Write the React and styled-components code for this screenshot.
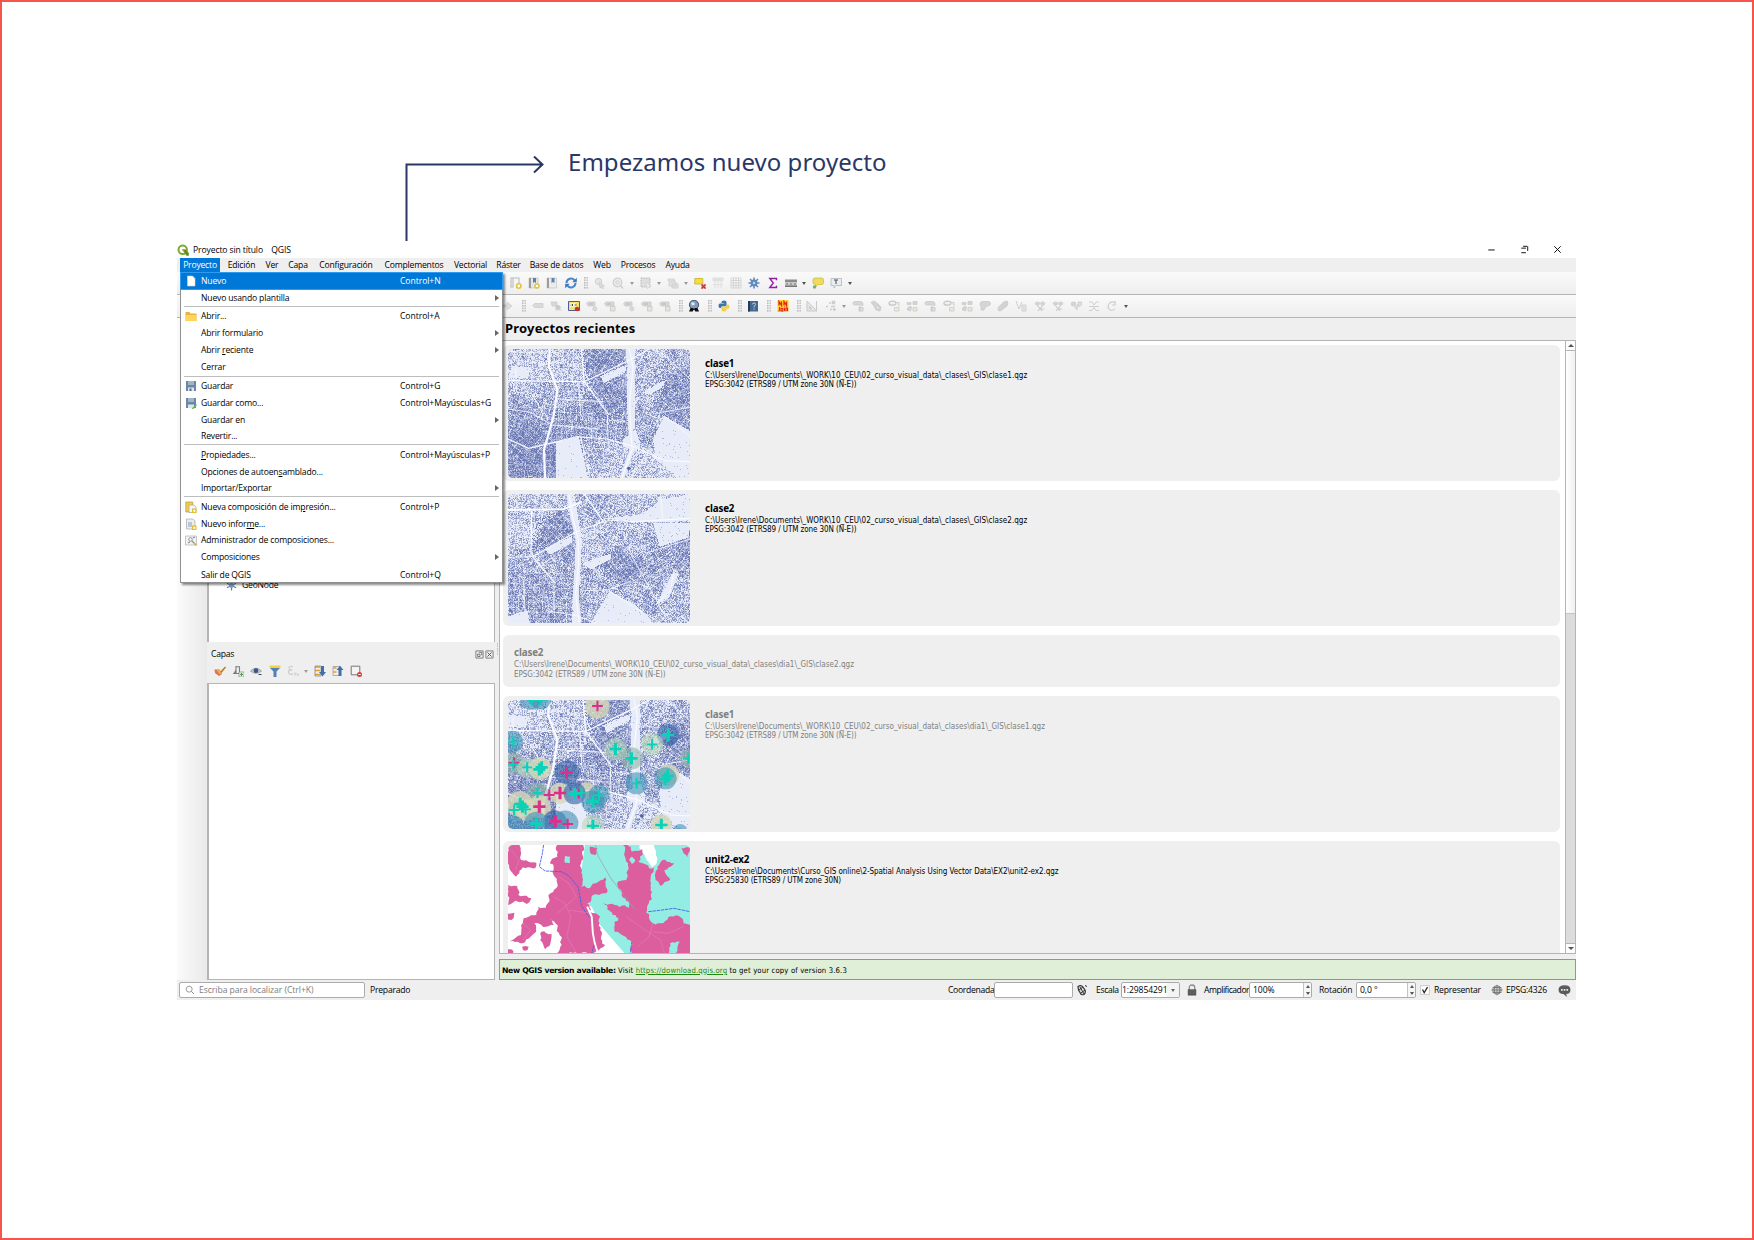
import React from "react";
import styled, { createGlobalStyle, css } from "styled-components";

const UI = `"Open Sans", "Noto Sans", "Liberation Sans", sans-serif`;
const TAHOMA = `"DejaVu Sans Condensed", "DejaVu Sans", "Noto Sans", sans-serif`;
const NAVY = "#2b3767";

const Global = createGlobalStyle`
  * { box-sizing: border-box; }
  html, body { margin: 0; background: #fff; }
  body { font-family: ${UI}; }
`;

const Page = styled.main`
  width: 1754px;
  height: 1240px;
  border: 2px solid #f4564e;
  padding: 138px 0 0 175px;
  background: #fff;
  overflow: hidden;
`;

const Note = styled.header`
  display: flex;
  height: 100px;
  padding-left: 226px;
`;
const NoteArrow = styled.svg`
  width: 148px;
  height: 101px;
  flex: none;
  position: relative;
  z-index: 1;
`;
const NoteText = styled.h1`
  margin: 5px 0 0 17px;
  font: 400 24px/34px "Noto Sans", sans-serif;
  letter-spacing: 0.04px;
  color: ${NAVY};
  white-space: nowrap;
`;

const Win = styled.section`
  position: relative;
  width: 1399px;
  height: 760px;
  display: flex;
  flex-direction: column;
  background: #efefef;
  color: #000;
  font-size: 8.6px;
  line-height: 12px;
  white-space: nowrap;
`;

const TitleBar = styled.div`
  height: 18px;
  flex: none;
  background: #fff;
  display: flex;
  align-items: center;
  padding: 1px 13px 0 0;
`;
const TitleText = styled.span`
  margin-left: 4px;
  letter-spacing: -0.12px;
`;
const WinButtons = styled.div`
  margin: -1px 0 0 auto;
  display: flex;
  gap: 22px;
`;

const MenuBar = styled.nav`
  height: 14px;
  flex: none;
  display: flex;
  padding-left: 3px;
`;
const MenuLabel = styled.span`
  width: ${(p) => p.$w}px;
  line-height: 15px;
  text-align: center;
  letter-spacing: -0.2px;
  ${(p) =>
    p.$open &&
    css`
      background: #0078d7;
      color: #fff;
    `}
`;

const Toolbar = styled.div`
  height: 23px;
  flex: none;
  display: flex;
  align-items: center;
  padding-left: ${(p) => p.$pad}px;
  border-bottom: 1px solid #b4b4b4;
  background: linear-gradient(#fafafa, #eeeeee);
`;
const Slot = styled.span`
  width: ${(p) => p.$w}px;
  flex: none;
  display: flex;
  justify-content: center;
  align-items: center;
`;
const Caret = styled.i`
  border: 2.5px solid transparent;
  border-top: 3px solid ${(p) => p.$c || "#9a9a9a"};
  border-bottom: 0;
`;
const Grip = styled.i`
  width: 4px;
  height: 12px;
  margin-left: 2px;
  background: radial-gradient(circle at 0.7px 0.7px, #bdbdbd 0.7px, transparent 0.9px) 0 0 / 2.5px 2.5px;
`;
const Svg = styled.svg`
  width: ${(p) => p.$s || 12}px;
  height: ${(p) => p.$s || 12}px;
  display: block;
  flex: none;
`;

const Body = styled.div`
  height: 662px;
  flex: none;
  display: flex;
`;
const SideTools = styled.div`
  width: 30px;
  flex: none;
  background: linear-gradient(90deg, #fbfbfb, #e9e9e9);
`;
const Docks = styled.div`
  width: 288px;
  flex: none;
  display: flex;
  flex-direction: column;
`;
const BrowserBox = styled.div`
  height: 324px;
  background: #fff;
  border: solid #b4b4b4;
  border-width: 0 1px 0 2px;
  padding: 261px 0 0 17px;
`;
const TreeRow = styled.div`
  display: flex;
  align-items: center;
  gap: 5px;
  height: 12px;
`;
const DockHead = styled.div`
  display: flex;
  height: 20px;
  margin-top: 2px;
  padding: 0 1px 0 4px;
  align-items: center;
`;
const DockButtons = styled.span`
  margin-left: auto;
  display: flex;
  gap: 1px;
`;
const DockTools = styled.div`
  height: 19px;
  display: flex;
  align-items: center;
  padding: 0 0 5px 4px;
`;
const LayersBox = styled.div`
  flex: 1;
  background: #fff;
  border: 1px solid #b4b4b4;
  border-left-width: 2px;
`;
const Splitter = styled.div`
  width: 4px;
  flex: none;
  display: flex;
  align-items: center;
  justify-content: center;
`;

const Main = styled.div`
  flex: 1;
  min-width: 0;
  display: flex;
  flex-direction: column;
`;
const Heading = styled.h2`
  margin: 0;
  height: 22px;
  padding-left: 6px;
  font: 700 13px/21px "Noto Sans", sans-serif;
  letter-spacing: 0.18px;
`;
const ListBox = styled.div`
  height: 614px;
  flex: none;
  display: flex;
  border: 1px solid #b4b4b4;
  background: #fff;
  overflow: hidden;
`;
const Cards = styled.div`
  flex: 1;
  display: flex;
  flex-direction: column;
  gap: 9px;
  padding: 4px 5px 0 3px;
`;
const Card = styled.article`
  height: ${(p) => (p.$short ? 52 : 136)}px;
  flex: none;
  display: flex;
  gap: 15px;
  padding: 4px 5px;
  padding-left: ${(p) => (p.$short ? 11 : 5)}px;
  border-radius: 6px;
  background: #efefef;
  color: ${(p) => (p.$off ? "#808080" : "#000")};
`;
const Thumb = styled.svg`
  width: 182px;
  height: 129px;
  border-radius: 5px;
  flex: none;
`;
const Info = styled.div`
  padding-top: ${(p) => (p.$short ? 7 : 7.5)}px;
  font: 400 8px/9px ${TAHOMA};
`;
const Name = styled.h3`
  margin: 0;
  font: 700 9.8px/14px "Noto Sans", sans-serif;
  letter-spacing: -0.15px;
`;
const Line = styled.p`
  margin: 0;
  line-height: 9.5px;
  letter-spacing: ${(p) => p.$ls ?? -0.09}px;
`;

const Scroll = styled.div`
  width: 10px;
  flex: none;
  display: flex;
  flex-direction: column;
  border-left: 1px solid #b4b4b4;
  background: #dcdcdc;
`;
const ScrollBtn = styled.div`
  height: 10px;
  display: flex;
  align-items: center;
  justify-content: center;
  background: #fcfcfc;
  border: solid #b4b4b4;
  border-width: ${(p) => (p.$down ? "1px 0 0" : "0 0 1px")};
  i {
    border: 3px solid transparent;
    ${(p) =>
      p.$down
        ? "border-top-color:#555;border-bottom:0;"
        : "border-bottom-color:#555;border-top:0;"}
  }
`;
const ScrollThumb = styled.div`
  height: 263px;
  margin-bottom: auto;
  background: linear-gradient(90deg, #fff, #f0f0f0);
  border-bottom: 1px solid #c4c4c4;
`;

const MessageBar = styled.div`
  margin-top: 5px;
  height: 21px;
  border: 1px solid #8c9a86;
  background: #dfefd8;
  padding-left: 2px;
  font: 400 7.7px/21px ${TAHOMA};
  letter-spacing: 0.13px;
  a {
    color: #1c8a12;
  }
  b {
    font: 700 7.7px/21px "DejaVu Sans", sans-serif;
    letter-spacing: -0.32px;
  }
`;

const StatusBar = styled.footer`
  height: 20px;
  flex: none;
  display: flex;
  align-items: center;
  padding: 0 5px 0 2px;
`;
const BottomLine = styled.div`
  height: 1px;
  background: linear-gradient(90deg, #9a918b 34px, #d9d6d3 34px 285px, #9a918b 285px);
`;
const Field = styled.span`
  width: ${(p) => p.$w}px;
  height: 16px;
  flex: none;
  display: flex;
  align-items: center;
  overflow: hidden;
  background: #fff;
  border: 1px solid #ababab;
  border-radius: 2px;
  padding-left: ${(p) => p.$p ?? 3}px;
  letter-spacing: -0.1px;
`;
const Locator = styled(Field)`
  gap: 4px;
  color: #7d7d7d;
  letter-spacing: -0.05px;
`;
const StatusText = styled.span`
  width: ${(p) => p.$w}px;
  flex: none;
  margin-left: ${(p) => p.$m || 0}px;
  letter-spacing: ${(p) => p.$ls ?? -0.22}px;
`;
const StatusRight = styled.div`
  margin-left: auto;
  display: flex;
  align-items: center;
`;
const Arrows = styled.span`
  margin-left: auto;
  width: 8px;
  height: 14px;
  display: flex;
  flex-direction: column;
  justify-content: space-around;
  align-items: center;
  border-left: 1px solid #c4c4c4;
  background: #f6f6f6;
  &::before {
    content: "";
    border: 2px solid transparent;
    border-top: 0;
    border-bottom: 3px solid #555;
  }
  &::after {
    content: "";
    border: 2px solid transparent;
    border-bottom: 0;
    border-top: 3px solid #555;
  }
`;
const DropZone = styled.span`
  margin-left: auto;
  width: 14px;
  height: 14px;
  display: flex;
  align-items: center;
  justify-content: center;
  background: #f4f4f4;
`;

const Menu = styled.div`
  position: absolute;
  left: 3px;
  top: 32px;
  width: 323px;
  height: 311px;
  border: 1px solid #909090;
  background: #fff;
  box-shadow: 2px 2px 2px rgba(0, 0, 0, 0.45);
`;
const Item = styled.div`
  height: ${(p) => p.$h}px;
  display: grid;
  grid-template-columns: 20px 199px 1fr 9px;
  align-items: center;
  padding-top: ${(p) => p.$pt || 0}px;
  letter-spacing: -0.17px;
  ${(p) =>
    p.$on &&
    css`
      background: #0078d7;
      color: #fff;
      box-shadow: 0 0 0 1px #2f9bf0;
    `}
`;
const Shortcut = styled.span`
  letter-spacing: -0.06px;
`;
const ItemIcon = styled.span`
  padding-left: 4px;
`;
const Sep = styled.hr`
  margin: 0 3px;
  border: 0;
  height: 1px;
  background: #bdbdbd;
`;
const Sub = styled.i`
  justify-self: start;
  margin-left: 2px;
  border: 3px solid transparent;
  border-left: 4px solid #666;
  border-right: 0;
`;

/* ---------- icons ---------- */

const G = "#cfcfcf";
const shapes = {
  page: <path d="M2.5 1h5l2.5 2.5V11h-7.500z" fill="#fff" stroke="#d5d5d5" strokeWidth=".6" />,
  folder: (
    <>
      <path d="M.5 2h4l1 1.500h6V11H.5z" fill="#e8b63a" />
      <path d="M.5 5h11v6H.5z" fill="#fcd45e" />
    </>
  ),
  save: (
    <>
      <path d="M1 1h10v10H1z" fill="#6a87a8" />
      <path d="M3 1h6v4H3z" fill="#a3b4c6" />
      <path d="M3 7.500h6V11H3z" fill="#dfe5ea" />
      <path d="M4.500 8.500h2V11h-2z" fill="#546a82" />
    </>
  ),
  saveAs: (
    <>
      <path d="M1 1h10v10H1z" fill="#6a87a8" />
      <path d="M3 1h6v4H3z" fill="#a3b4c6" />
      <path d="M3 7.500h6V11H3z" fill="#dfe5ea" />
      <path d="M6.500 11.800 11 7l1 1-3.500 4z" fill="#6bb35a" />
    </>
  ),
  newLayout: (
    <>
      <path d="M.8 1h7v10h-7z" fill="#f0cd4a" stroke="#b89a30" strokeWidth=".7" />
      <path d="M4 4h5l2 2v5.500H4z" fill="#f4f4f4" stroke="#a8a8a8" strokeWidth=".7" />
      <path d="M7 7.500h4.500V12H7z" fill="#e0c02f" />
      <path d="M8.300 8.800h2v2h-2z" fill="#fff" />
    </>
  ),
  newReport: (
    <>
      <path d="M1.500 1h6.500l2 2v8h-8.500z" fill="#eee" stroke="#a8a8a8" strokeWidth=".7" />
      <path d="M3 4h4v5H3z" fill="#b9c5d8" />
      <path d="M7 7.500h4.500V12H7z" fill="#e0c02f" />
      <path d="M8.300 8.800h2v2h-2z" fill="#fff" />
    </>
  ),
  layoutMgr: (
    <>
      <path d="M.5 2h11v9H.5z" fill="#f3f3f3" stroke="#b0b0b0" strokeWidth=".7" />
      <circle cx="5.500" cy="5.500" r="1.800" fill="none" stroke="#8d8d8d" strokeWidth=".9" />
      <path d="m7 7 4 4M8 4l2-1M3 9l2-1" stroke="#8d8d8d" strokeWidth="1.100" />
      <path d="m9 9 2.500 2.500" stroke="#d6b84a" strokeWidth="1.300" />
    </>
  ),
  bookmarkNew: (
    <>
      <path d="M1 1h2v9H1zM1 1h8v6" fill="none" stroke="#bcbcbc" strokeWidth="1.100" />
      <circle cx="8.800" cy="9" r="2.200" fill="#fff" stroke="#e0c43c" strokeWidth="1.600" />
    </>
  ),
  bookmarkAdd: (
    <>
      <path d="M1 1h9v10H1z" fill="#e6e6e6" stroke="#b8b8b8" strokeWidth=".6" />
      <path d="M1 1h2v10H1z" fill="#9d9d9d" />
      <path d="M5 1h3v5L6.500 5 5 6z" fill="#5c83b0" />
      <circle cx="9" cy="9" r="2" fill="#fff" stroke="#e0c43c" strokeWidth="1.500" />
    </>
  ),
  bookmark: (
    <>
      <path d="M1 1h9.500v10H1z" fill="#ececec" stroke="#c0c0c0" strokeWidth=".6" />
      <path d="M1 1h2v10H1z" fill="#9d9d9d" />
      <path d="M5.500 1h3v5L7 5 5.500 6z" fill="#5c83b0" />
    </>
  ),
  refresh: (
    <>
      <path d="M1.500 6A4.500 4.500 0 0 1 9.600 3.400M10.500 6A4.500 4.500 0 0 1 2.400 8.600" fill="none" stroke="#4b86c9" strokeWidth="2" />
      <path d="M11.800.8v4.500H7.300zM.2 11.200V6.700h4.500z" fill="#3d76ba" />
    </>
  ),
  pick: (
    <>
      <circle cx="4.500" cy="4.500" r="3.200" fill="#e6e6e6" stroke={G} />
      <path d="m5 5 5.500 4-2 .3.800 2-1.200.4-.8-2L6 11z" fill="#dcdcdc" stroke="#c6c6c6" strokeWidth=".6" />
    </>
  ),
  lens: (
    <>
      <circle cx="5.500" cy="5.500" r="4.300" fill="#ececec" stroke={G} strokeWidth="1.200" />
      <circle cx="5.500" cy="5.500" r="1.600" fill="none" stroke={G} />
      <path d="m8 8 3 3.500" stroke={G} strokeWidth="1.500" />
    </>
  ),
  selBox: (
    <>
      <path d="M1 1h9v9H1z" fill="#dedede" stroke="#b9b9b9" strokeDasharray="1.500 1" />
      <path d="m6 5 5 4.500-2.500.3L7.500 12z" fill="#f2f2f2" stroke={G} strokeWidth=".6" />
    </>
  ),
  copies: (
    <path d="M1 2h6l1 2H1zM2 5h7v4H2zM5 7h6v4H5z" fill="#e3e3e3" stroke="#cdcdcd" strokeWidth=".8" />
  ),
  deselect: (
    <>
      <path d="M.8 1.500h8v5.500h-8z" fill="#f5dd3a" stroke="#c8b02c" strokeWidth=".8" />
      <path d="M7 7h5v5H7z" fill="#f4b5b5" />
      <path d="m7.500 7.500 4 4m0-4-4 4" stroke="#cf2323" strokeWidth="1.200" />
    </>
  ),
  table: (
    <>
      <path d="M1 1h10v10H1z" fill="#f2f2f2" />
      <path d="M1 1h10v3H1zM3 5v6M6 5v6M9 5v6M1 7.500h10" stroke="#e0e0e0" fill="#e0e0e0" />
    </>
  ),
  calc: (
    <path d="M1 1h10v10H1zM1 3.500h10M1 6h10M1 8.500h10M3.500 1v10M6 1v10M8.500 1v10" fill="none" stroke="#d2d2d2" strokeWidth=".9" />
  ),
  gear: (
    <>
      <path d="M6 .5v11M.5 6h11M2 2l8 8M10 2l-8 8" stroke="#5f8ac0" strokeWidth="1.600" />
      <circle cx="6" cy="6" r="3.400" fill="#5f8ac0" />
      <circle cx="6" cy="6" r="1.200" fill="#c6d6ea" />
    </>
  ),
  sigma: <path d="M9.500 3.300V1.500H2.800l3.500 4.500-3.500 4.500h6.700V8.700" fill="none" stroke="#981ba5" strokeWidth="1.400" />,
  ruler: (
    <>
      <path d="M0 2.500h12V5H0z" fill="#8b8b8b" />
      <path d="M0 5h12v5H0z" fill="#c8c8c8" />
      <path d="M0 8.500h12V10H0zM1 6.500h2v1H1zM5 6.500h2v1H5zM9 6.500h2v1H9z" fill="#777" />
    </>
  ),
  tip: (
    <>
      <path d="M3 1h7q1.500 0 1.500 2v2.500q0 2-1.500 2H6L3 11l.5-3.500Q1 7.500 1 5.500V3q0-2 2-2z" fill="#efdc5e" stroke="#c9b441" strokeWidth=".7" />
      <circle cx="2.500" cy="10" r="1.700" fill="#77b26b" />
    </>
  ),
  textNote: (
    <>
      <path d="M1 1.500h10.500v7H6L4 11V8.500H1z" fill="#e8edf1" stroke="#b5bcc2" strokeWidth=".9" />
      <path d="M4 3h4M6 3v4" stroke="#555" strokeWidth="1.100" />
    </>
  ),
  next: <path d="M0 5h5V2l5 4-5 4V7H0z" fill="#dcdcdc" stroke="#c8c8c8" strokeWidth=".6" />,
  tag: <path d="m.5 5.500 2-2H11v4H2.500z" fill="#dadada" stroke="#cfcfcf" strokeWidth=".9" />,
  tagDot: (
    <>
      <path d="M1 2h6v4H2z" fill="#d8d8d8" stroke="#cbcbcb" strokeWidth=".8" />
      <circle cx="8" cy="7.500" r="2.600" fill="#cacaca" />
      <path d="M5 10h7" stroke="#d8d8d8" />
    </>
  ),
  labelOn: (
    <>
      <path d="M.5 1.500h11v9H.5z" fill="#f7e36a" stroke="#4a5f9c" />
      <path d="M2 3.500h6v3H2z" fill="#fff" />
      <path d="M2.500 5h1M4.500 4v2M6.500 5h2" stroke="#333" strokeWidth=".9" />
      <circle cx="9" cy="9" r="2.300" fill="#c9312c" />
    </>
  ),
  tagB: (
    <>
      <path d="M.5 3.500 2 2h7v4H2z" fill="#d8d8d8" stroke="#cacaca" strokeWidth=".8" />
      <path d="M3 4h4" stroke="#b4b4b4" />
      <circle cx="8.800" cy="8.800" r="2" fill="#e0dad7" stroke="#cdc8c5" strokeWidth=".8" />
    </>
  ),
  tagC: (
    <>
      <path d="M.5 3.500 2 2h8v4H2z" fill="#d8d8d8" stroke="#cacaca" strokeWidth=".8" />
      <path d="M3 4h4" stroke="#b4b4b4" />
      <path d="M6.500 6.500h4.500V11H6.500z" fill="#e6e4de" stroke="#cdccc5" strokeWidth=".9" />
    </>
  ),
  globeFind: (
    <>
      <circle cx="6" cy="4.800" r="4.600" fill="#7f9dc0" stroke="#28394d" strokeWidth=".8" />
      <path d="M3 2.500h3l1 2-3 1zM7 1.500l2.500 1.500" fill="#e5edf5" />
      <path d="M1 11.500 2.500 8h2.800l.4 1.500h.6L6.700 8h2.800L11 11.500H7.300L6.500 10h-1l-.8 1.500z" fill="#111" />
    </>
  ),
  python: (
    <>
      <path d="M3.500 3V2q0-1.500 2.500-1.500T8.500 2v3q0 1.200-1.500 1.200H4.500Q3 6.200 3 8H2Q.5 8 .5 5.800T2 3.500h4V3z" fill="#3b76ad" />
      <path d="M8.500 9v1q0 1.500-2.500 1.500T3.500 10V7.500Q3.500 6.500 5 6.500h2.500Q9 6.300 9 4.500h1q1.500 0 1.500 2.200T10 8.800H6V9z" fill="#f8ce45" />
    </>
  ),
  help: (
    <>
      <path d="M1 1h10v10.500H1z" fill="#46688f" />
      <path d="M1 1h2v10.500H1z" fill="#273c55" />
      <path d="M5.300 4.500Q5.500 3 7 3t1.600 1.400Q8.500 5.500 7 6.200v1.300M7 8.500v1.200" fill="none" stroke="#c3d2e3" strokeWidth="1" />
    </>
  ),
  nn: (
    <>
      <path d="M.5 0h11v12H.5z" fill="#ffd22e" />
      <path d="M2 5.500v-4l2.500 4v-4M7 5.500v-4l2.500 4v-4" fill="none" stroke="#e3261b" strokeWidth="1.300" />
      <path d="M2.500 7v3q0 1-1 1M4 8.500h1.800V11H4zM7.500 8v3M9 11V8h1.500v3M7.500 6.500v.7" fill="none" stroke="#e3261b" strokeWidth="1.100" />
    </>
  ),
  setsq: <path d="M1 1v10h10zM3.500 6.500V8.800h2.400zM10.500 1v10" fill="#e6e6e6" stroke="#c9c9c9" />,
  nodes: (
    <path d="M1 6.500h2M4 3h2M7.500 1.500h2v2h-2zM6 6.500h4M5 9.500h2M9 8v3M8 9.500h3" fill="none" stroke="#cccccc" strokeWidth="1.400" />
  ),
  vecA: (
    <>
      <path d="M.8 3.500q0-2 2-2H8q3 0 3 2v2L8 5H2.500Q.8 5 .8 3.500z" fill="#d6d8d6" stroke="#cacaca" strokeWidth=".8" />
      <path d="M7 7.500h4V11H7zM8 6v5" fill="#e4e4de" stroke="#c6c6c6" strokeWidth=".9" />
    </>
  ),
  vecB: (
    <>
      <path d="M1 2.500 4 1l4 3 3 3-1 4-4-1-2-4z" fill="#d2d5d2" stroke="#c8c8c8" strokeWidth=".8" />
      <circle cx="7.500" cy="7.500" r="1.500" fill="#efefef" stroke="#bfc9bf" strokeWidth=".8" />
    </>
  ),
  vecC: (
    <>
      <ellipse cx="4.500" cy="3.200" rx="3.600" ry="2" fill="#efefef" stroke="#c6c6c6" strokeWidth="1.200" />
      <path d="M8 2.500h3v4M6.500 7.500h4.500V11H6.500z" fill="#eae8e0" stroke="#d4cfc4" strokeWidth=".9" />
    </>
  ),
  vecD: (
    <>
      <path d="M1 2.500h4v2H1zM7 1.500h4v3H7zM1.500 8q2-3 4-1l-1 4-3-1z" fill="#d4d4d4" stroke="#cbcbcb" strokeWidth=".8" />
      <path d="M7 7.500h4V11H7z" fill="#e9e6dc" stroke="#d0cabd" strokeWidth=".8" />
    </>
  ),
  vecE: <path d="M1 4q0-2.500 3-2.500h5q2.500 0 2.500 2T9 6L7 6.500 5 10H2V6q-1-1-1-2z" fill="#d4d6d4" stroke="#cacaca" strokeWidth=".8" />,
  vecF: <path d="M1 8q1-2 3-3 2-4 6-4 2 2 0 5l-4 3q-1 2-4 2-1-1-1-3z" fill="#d2d4d0" stroke="#c9c9c9" strokeWidth=".8" />,
  vecG: (
    <>
      <path d="m1 1 3 8 3-7" fill="none" stroke="#c8cdd0" />
      <path d="M7 5h4v6H7zM8 7h2M8 9h2" fill="#ededed" stroke="#c6c6c6" strokeWidth=".8" />
    </>
  ),
  vecH: (
    <>
      <ellipse cx="3.500" cy="3.500" rx="2.700" ry="2" fill="#d2d4d2" />
      <ellipse cx="8.700" cy="3.500" rx="2.600" ry="2" fill="#d2d4d2" />
      <path d="m3 5 5 6M9 5 4 11M6 9h4" stroke="#c9c9c9" strokeWidth="1.100" />
    </>
  ),
  vecI: (
    <>
      <ellipse cx="3.500" cy="4" rx="2.800" ry="2.400" fill="#d2d4d2" />
      <path d="M8 2h3.500v3L9 7zM4 6l3 4 1-6" fill="#dedede" stroke="#cccccc" strokeWidth=".8" />
    </>
  ),
  vecJ: <path d="M1 2h3l2 3 2-3h3M1 10.500h3l2-3 2 3h3M1 6.500h10" fill="none" stroke="#cfcfcf" />,
  vecK: <path d="M9 2.500Q5 .8 3 4t.5 5.500Q5 11.500 9 9M9 1v4H6" fill="none" stroke="#cfcfcf" strokeWidth="1.200" />,
  brush: (
    <>
      <path d="M.5 4.500h5L8 9l-3 2-4-3z" fill="#e0705a" />
      <path d="m2.500 5 3-1 2.500 4-2.500 1z" fill="#efb13a" />
      <path d="m6.500 6.500 4.500-5 1 1-4.500 5.500z" fill="#b07a2b" />
    </>
  ),
  addGroup: (
    <>
      <path d="M4 1v8M4 1.700h3.500V8M1 8.500h8M2 8.500 4 5" fill="none" stroke="#7b7b7b" strokeWidth="1.100" />
      <path d="M7 7h5v5H7z" fill="#e8f2e5" stroke="#8b8b8b" strokeWidth=".7" />
      <path d="M9.500 8v3M8 9.500h3" stroke="#47a13a" />
    </>
  ),
  eye: (
    <>
      <path d="M.5 6Q6 .5 11.500 6 6 10.500.5 6z" fill="#c9cdd2" stroke="#808890" strokeWidth=".7" />
      <circle cx="6" cy="5.700" r="2.400" fill="#39587d" />
      <path d="M8.500 9.500h3" stroke="#444" />
    </>
  ),
  filter: (
    <>
      <path d="M.5.500h11v2.500H.5z" fill="#f2d438" />
      <path d="M1 3h10L7.500 6.500V12h-3V6.500z" fill="#5481b3" />
    </>
  ),
  expr: (
    <>
      <path d="M6 1.500Q2 .8 2 3t3 2Q1 5 1.500 7.500T6 9" fill="none" stroke="#cfcfcf" strokeWidth="1.300" />
      <path d="M7 7.500h2.500v3H7zM10 8.500h2v2.500h-2z" fill="#d8d8d8" />
    </>
  ),
  expand: (
    <>
      <path d="M1 2h5M1 5.500h5M1 9.500h5" stroke="#e89a2a" strokeWidth="1.400" />
      <path d="M1 1h6v10H1z" fill="none" stroke="#8c8c8c" strokeWidth=".8" />
      <path d="M7 1h3v6h2l-3.500 4.500L5 7h2z" fill="#3f6fa6" />
    </>
  ),
  collapse: (
    <>
      <path d="M1.500 3h3M1.500 7h3" stroke="#e89a2a" strokeWidth="1.400" />
      <path d="M1 1.500h7v9H1z" fill="none" stroke="#9c9c9c" strokeWidth=".8" />
      <path d="M6.500 11h3V5h2L8 .8 4.500 5h2z" fill="#3f6fa6" />
    </>
  ),
  remove: (
    <>
      <path d="M1.200 1.200h8.600v8.600H1.200z" fill="#f4f4f4" stroke="#777" />
      <circle cx="9.500" cy="9.500" r="2.500" fill="#de3b3b" />
      <path d="M8.300 9.500h2.400" stroke="#fff" />
    </>
  ),
  flake: (
    <>
      <path d="M6 .5v11M1 3.500l10 5M11 3.500l-10 5" stroke="#5f83aa" strokeWidth="1.400" />
      <circle cx="6" cy="6" r="2.600" fill="#7d9dbf" />
    </>
  ),
  float: (
    <>
      <path d="M1.200 1.200h9.600v9.600H1.200z" fill="none" stroke="#777" strokeWidth="1.200" />
      <path d="M5 3h4v4M3.500 5.500h3.200v3.200H3.500z" fill="none" stroke="#555" />
    </>
  ),
  close: (
    <>
      <path d="M1.200 1.200h9.600v9.600H1.200z" fill="none" stroke="#777" strokeWidth="1.200" />
      <path d="m3.300 3.300 5.400 5.400m0-5.400-5.400 5.400" stroke="#555" strokeWidth="1.300" />
    </>
  ),
  search: (
    <>
      <circle cx="5" cy="5" r="3.600" fill="none" stroke="#8a8a8a" />
      <path d="m7.800 7.800 3 3" stroke="#8a8a8a" strokeWidth="1.200" />
    </>
  ),
  target: (
    <>
      <path d="M2 2.500Q5 .5 7 3l2 3q1 3-1 4.500-3 1-4-2L2.500 6z" fill="#ddd" stroke="#333" strokeWidth="1.200" />
      <path d="m3 6 4-3M5 9 9 6M9 1.500l2 1M4 3l4 7" stroke="#333" strokeWidth="1" />
    </>
  ),
  lock: (
    <>
      <path d="M3.300 6V3.500Q3.300 1 6 1t2.700 2.500V6" fill="none" stroke="#8b8b8b" strokeWidth="1.300" />
      <path d="M1.800 5.300h8.400v6.200H1.800z" fill="#555" />
      <path d="M1.800 7h8.400M1.800 9h8.400" stroke="#777" strokeWidth=".6" />
    </>
  ),
  check: (
    <>
      <path d="M.7.700h10.600v10.600H.7z" fill="#fff" stroke="#b5b5b5" strokeWidth=".8" />
      <path d="M3 5.500 5 9.300 9 2.500" fill="none" stroke="#222" strokeWidth="1.500" />
    </>
  ),
  globe: (
    <>
      <circle cx="6" cy="6" r="4.200" fill="#d0d0d0" stroke="#777" strokeWidth=".9" />
      <path d="M.3 6h11.400M6 .8v10.400M1.500 3.500h9M1.500 8.500h9M4 2q-1.500 4 0 8M8 2q1.500 4 0 8" fill="none" stroke="#707070" strokeWidth=".8" />
    </>
  ),
  bubble: (
    <>
      <path d="M6 1.200q5.500 0 5.500 4T7.500 9.200L8.500 12 5 9.200Q.5 9 .5 5.200T6 1.200z" fill="#5b5b5b" />
      <path d="M2.800 4.700h1.500v1.500H2.800zM5.300 4.700h1.500v1.500H5.300zM7.800 4.700h1.500v1.500H7.800z" fill="#eee" />
    </>
  ),
  logo: (
    <>
      <circle cx="5.700" cy="5.700" r="4.200" fill="none" stroke="#79a92d" strokeWidth="2" />
      <path d="m5.500 5.500 2.800-.3L11.800 9v2.800H9.500z" fill="#5c8f27" />
      <path d="m5 5 1 2.800L8 6z" fill="#e9762b" />
    </>
  ),
  winMin: <path d="M2.500 6.500h7" stroke="#000" />,
  winRestore: <path d="M2.500 4.500h5M2.500 9.500h5M4.500 2.500h4.500M9.500 2.500v5" fill="none" stroke="#000" />,
  winClose: <path d="m2.500 2.500 7 7m0-7-7 7" stroke="#000" />,
};

const Icon = ({ n, s }) => (
  <Svg viewBox="0 0 12 12" $s={s}>
    {shapes[n]}
  </Svg>
);

const Tools = ({ list }) =>
  list.map((t, i) =>
    t === "|" ? (
      <Slot key={i} $w={11.3}>
        <Grip />
      </Slot>
    ) : t[0] === "v" && t.length <= 2 ? (
      <Slot key={i} $w={9}>
        <Caret $c={t === "vd" ? "#555" : undefined} />
      </Slot>
    ) : (
      <Slot key={i} $w={18.2}>
        <Icon n={t} />
      </Slot>
    )
  );

/* ---------- project thumbnails ---------- */

const rng = (seed) => () => {
  seed = (seed + 0x6d2b79f5) | 0;
  let t = Math.imul(seed ^ (seed >>> 15), 1 | seed);
  t = (t + Math.imul(t ^ (t >>> 7), 61 | t)) ^ t;
  return ((t ^ (t >>> 14)) >>> 0) / 4294967296;
};

const inside = (px, py, poly) => {
  let c = false;
  for (let i = 0, j = poly.length - 1; i < poly.length; j = i++) {
    const [xi, yi] = poly[i];
    const [xj, yj] = poly[j];
    if (yi > py !== yj > py && px < ((xj - xi) * (py - yi)) / (yj - yi) + xi) c = !c;
  }
  return c;
};

const SHADES = ["#c9d0e9", "#b0b9dc", "#98a3cf", "#808cc0", "#6a77b0"];

// Building footprints: districts with their own street angle, spacing and density.
const blocks = (seed, districts, parks) => {
  const r = rng(seed);
  const coarse = Array.from({ length: 40 * 30 }, r);
  const out = SHADES.map(() => "");
  for (let y = 0; y < 129; y++) {
    for (let x = 0; x < 182; x++) {
      const v = r();
      const w = r();
      let best = districts[0];
      let bd = 1e9;
      const jx = x + (v - 0.5) * 9;
      const jy = y + (w - 0.5) * 9;
      for (const d of districts) {
        const q = (d[0] - jx) ** 2 + (d[1] - jy) ** 2;
        if (q < bd) {
          bd = q;
          best = d;
        }
      }
      const [, , ang, su, sv, dens] = best;
      const cu = Math.cos(ang) * x + Math.sin(ang) * y + 500;
      const cv = -Math.sin(ang) * x + Math.cos(ang) * y + 500;
      const street = cu % su < 0.9 || cv % sv < 0.9;
      const local = coarse[Math.floor(y / 5) * 40 + Math.floor(x / 5)];
      let value = dens * 0.92 + (v - 0.5) * (1.25 - dens * 0.5) + (local - 0.5) * 0.28 - (street ? 0.3 : 0);
      if (parks.some((k) => inside(x * 2.615, y * 3, k))) value = v < 0.02 ? 0.5 : 0;
      const k = Math.min(SHADES.length, Math.floor(value * 5.2));
      if (k > 0) out[k - 1] += `M${x} ${y}h1v1h-1z`;
    }
  }
  return out;
};

const pts = (a) => a.map((p) => p.join(",")).join(" ");

const cityA = {
  parks: [
    [[124, 278], [184, 263], [208, 387], [124, 387]],
    [[408, 200], [476, 245], [476, 387], [440, 387], [415, 350], [385, 330], [378, 270]],
    [[300, 270], [332, 240], [345, 285], [332, 305], [298, 290]],
    [[240, 80], [310, 45], [305, 70], [250, 100]],
    [[308, 0], [330, 0], [330, 240], [312, 240]],
    [[350, 130], [395, 100], [415, 90], [400, 115], [370, 135]],
    [[10, 50], [60, 55], [50, 85], [0, 85]],
  ],
  districts: [
    [20, 12, 0.1, 7, 6, 0.38], [20, 35, 0.2, 8, 6, 0.42], [12, 60, 0.5, 6, 5, 0.8], [36, 52, 0.2, 6, 5, 0.68],
    [15, 95, 0.7, 7, 6, 0.95], [25, 120, 0.1, 8, 6, 0.9], [62, 22, 0.05, 5, 6, 0.42], [60, 45, 0.02, 5, 6, 0.62],
    [62, 65, 0.04, 6, 7, 0.76], [68, 85, 0.03, 5, 6, 0.76], [92, 16, 0.6, 6, 5, 0.86], [100, 50, 1, 8, 6, 0.85],
    [103, 75, 0.1, 5, 7, 0.72], [85, 105, 0.05, 5, 6, 0.6], [105, 115, 0.3, 8, 7, 0.38], [145, 10, 0.5, 4, 5, 0.5],
    [165, 12, 1, 5, 5, 0.62], [168, 34, 1.1, 5, 6, 0.86], [140, 38, 0.8, 5, 5, 0.55], [160, 52, 0.7, 5, 4, 0.84],
    [174, 64, 0.5, 4, 5, 0.86], [138, 72, 0.4, 4, 5, 0.66], [135, 120, 0.6, 8, 9, 0.36], [165, 125, 0.6, 7, 7, 0.25],
  ],
  roads: [
    [[109, 0], [107, 53], [129, 123], [119, 203], [94, 303], [97, 387]],
    [[192, 0], [199, 98], [264, 198]],
    [[199, 98], [310, 38], [369, 0]],
    [[0, 95], [199, 98]],
    [[0, 270], [54, 298], [129, 278], [180, 263], [260, 270], [330, 293], [410, 335], [476, 338]],
    [[0, 8], [100, 12]],
    [[260, 198], [262, 290]],
    [[120, 228], [240, 240]],
    [[0, 180], [60, 190], [110, 225]],
    [[129, 150], [250, 158]],
    [[185, 100], [190, 200]],
    [[400, 190], [476, 175]],
    [[408, 200], [476, 262]],
    [[365, 360], [390, 320]],
    [[190, 263], [215, 387]],
    [[20, 60], [22, 130]],
    [[400, 10], [476, 90]],
    [[60, 130], [90, 190]],
  ],
  wide: [[317, 0], [327, 55], [318, 160], [322, 260], [325, 300], [298, 387]],
};

const cityB = {
  parks: [
    [[250, 72], [350, 60], [400, 15], [476, 0], [476, 80], [360, 84]],
    [[378, 85], [476, 85], [470, 130], [395, 155]],
    [[195, 205], [265, 178], [270, 192], [215, 225]],
    [[264, 290], [330, 330], [380, 387], [215, 387]],
    [[0, 365], [50, 348], [56, 387], [0, 387]],
    [[95, 165], [165, 125], [165, 145], [110, 180]],
    [[430, 235], [445, 235], [420, 310], [385, 330]],
    [[155, 0], [172, 0], [192, 140], [180, 387], [166, 387], [176, 140]],
  ],
  districts: [
    [20, 8, 0.3, 6, 6, 0.45], [15, 35, 0.1, 7, 5, 0.38], [42, 45, 0.8, 6, 5, 0.86], [22, 90, 0.05, 5, 6, 0.7],
    [48, 100, 0.06, 6, 5, 0.72], [30, 65, 1, 6, 7, 0.62], [85, 12, 0.5, 5, 4, 0.62], [110, 20, 0.7, 4, 5, 0.5],
    [90, 45, 0.6, 5, 6, 0.45], [112, 72, 0.9, 5, 4, 0.9], [88, 92, 0.4, 4, 5, 0.6], [128, 45, 0.5, 7, 5, 0.5],
    [150, 70, 1, 5, 6, 0.68], [172, 62, 0.7, 5, 5, 0.78], [135, 96, 0.5, 6, 5, 0.6], [172, 95, 0.3, 7, 6, 0.5],
    [165, 120, 0.8, 6, 5, 0.55], [45, 122, 0, 6, 6, 0.72], [145, 5, 0.4, 5, 6, 0.4],
  ],
  roads: [
    [[0, 48], [144, 46], [194, 23]],
    [[64, 188], [179, 113], [249, 83], [200, 0]],
    [[64, 188], [124, 268]],
    [[62, 50], [60, 188]],
    [[261, 78], [330, 83], [476, 73]],
    [[320, 178], [414, 373]],
    [[359, 178], [476, 135]],
    [[400, 0], [404, 72]],
    [[434, 228], [476, 228]],
    [[434, 228], [425, 290], [389, 328]],
    [[195, 290], [260, 288], [320, 262]],
    [[264, 290], [330, 340], [400, 387]],
    [[100, 350], [180, 365], [230, 387]],
    [[120, 268], [120, 350]],
    [[40, 260], [45, 350]],
    [[0, 190], [64, 188]],
  ],
  wide: [[159, 0], [169, 68], [184, 138], [184, 218], [177, 298], [186, 387]],
};

const City = ({ c, seed }) => {
  const layers = React.useMemo(() => blocks(seed, c.districts, c.parks), [c, seed]);
  return (
    <>
      <rect width="520" height="400" fill="#e8ecf8" />
      <g transform="scale(2.6154 3)" shapeRendering="crispEdges">
        {layers.map((d, i) => (
          <path key={i} d={d} fill={SHADES[i]} />
        ))}
      </g>
      <polyline points={pts(c.wide)} fill="none" stroke="#e8ecf8" strokeWidth="13" />
      <g fill="none" stroke="#f8faff">
        <polyline points={pts(c.wide)} strokeWidth="3" />
        {c.roads.map((r, i) => (
          <polyline key={i} points={pts(r)} strokeWidth={i === 0 ? 6 : i < 5 ? 3.5 : 2.4} />
        ))}
      </g>
    </>
  );
};

const BLUE = "#3f93b5";
const DARK = "#2f5fa5";
const GREEN = "#b9d9bd";
const SAGE = "#8fb5a8";
const CREAM = "#d6d8b8";
const zones = [
  [60, -4, BLUE], [85, -5, BLUE], [234, 20, CREAM, 32], [419, 105, DARK], [377, 133, GREEN], [281, 147, GREEN],
  [323, 175, SAGE], [10, 125, BLUE], [14, 190, SAGE], [84, 205, CREAM, 30], [50, 205, GREEN, 26], [154, 218, DARK, 32],
  [336, 250, BLUE], [420, 225, CREAM, 28], [412, 235, BLUE], [476, 175, SAGE, 26], [77, 280, SAGE], [136, 280, CREAM, 28],
  [205, 272, CREAM, 22], [174, 280, DARK], [222, 305, BLUE, 30], [238, 285, BLUE, 27], [30, 312, CREAM, 34], [82, 320, CREAM, 30],
  [48, 330, CREAM, 28], [122, 367, DARK, 32], [150, 370, BLUE, 34], [74, 372, BLUE, 32], [12, 380, BLUE, 30], [222, 378, GREEN],
  [401, 375, CREAM, 28], [450, 395, BLUE, 20],
];
const PINK = "#dd2f8a";
const TEAL = "#0ad2b8";
const marks = [
  [62, 2, TEAL, 12], [86, 2, TEAL, 12], [234, 18, PINK, 14], [419, 105, TEAL], [377, 133, TEAL, 14], [281, 147, TEAL], [323, 175, TEAL],
  [14, 125, TEAL, 14], [16, 188, PINK, 14], [14, 194, TEAL, 13], [50, 202, TEAL, 13], [82, 208, TEAL], [88, 202, TEAL], [153, 218, PINK],
  [336, 250, TEAL, 14], [418, 228, TEAL], [411, 237, TEAL], [472, 175, TEAL, 14], [77, 279, TEAL, 13], [108, 285, PINK, 14],
  [136, 279, PINK], [185, 281, PINK, 13], [174, 281, TEAL], [192, 279, TEAL, 13], [222, 305, TEAL], [238, 286, TEAL, 14], [32, 312, TEAL],
  [16, 330, TEAL, 14], [46, 328, TEAL, 14], [38, 320, TEAL], [82, 320, PINK], [124, 364, PINK], [156, 372, PINK, 14],
  [74, 371, TEAL], [222, 378, TEAL], [401, 375, TEAL],
];

const Thumb1 = () => (
  <Thumb viewBox="0 0 476 387" preserveAspectRatio="none">
    <City c={cityA} seed={11} />
    <circle cx="316" cy="358" r="5" fill="#54629c" />
  </Thumb>
);
const Thumb2 = () => (
  <Thumb viewBox="0 0 476 387" preserveAspectRatio="none">
    <City c={cityB} seed={29} />
  </Thumb>
);
const Thumb3 = () => (
  <Thumb viewBox="0 0 476 387" preserveAspectRatio="none">
    <g transform="translate(-8 -10) scale(1.06)">
      <City c={cityA} seed={11} />
    </g>
    <circle cx="350" cy="348" r="5" fill="#54629c" />
    {zones.map(([x, y, f, r = 29], i) => (
      <ellipse key={i} cx={x} cy={y} rx={r} ry={r * 1.14} fill={f} fillOpacity={f === CREAM ? 0.8 : 0.6} />
    ))}
    {marks.map(([x, y, f, r = 16], i) => (
      <path
        key={i}
        d={`M${x - r} ${y}h${2 * r}M${x} ${y - r * 1.15}v${2.3 * r}`}
        stroke={f}
        strokeWidth={r > 14 ? 8 : 5.5}
      />
    ))}
  </Thumb>
);

// Breaks straight polygon edges into ragged ones.
const rough = (poly, seed, amp) => {
  const r = rng(seed);
  const out = [];
  poly.forEach(([x, y], i) => {
    const [nx, ny] = poly[(i + 1) % poly.length];
    const len = Math.hypot(nx - x, ny - y) || 1;
    const n = Math.max(1, Math.round(len / 7));
    const ux = -(ny - y) / len;
    const uy = (nx - x) / len;
    let e = 0;
    for (let k = 0; k < n; k++) {
      e = k === 0 ? 0 : e * 0.55 + (r() - 0.5) * 2 * amp;
      out.push([(x + ((nx - x) * k) / n + ux * e).toFixed(1), (y + ((ny - y) * k) / n + uy * e).toFixed(1)]);
    }
  });
  return pts(out);
};

const pinkAreas = [
  [[322, 645], [335, 640], [345, 665], [372, 658], [362, 695], [390, 715], [402, 712], [395, 760], [395, 800], [385, 840], [395, 875], [420, 880], [440, 862], [468, 858], [480, 880], [500, 885], [500, 975], [350, 975], [340, 930], [300, 905], [295, 880], [310, 865], [290, 850], [270, 820], [300, 825], [345, 835], [318, 795], [306, 760], [330, 750], [335, 700]],
  [[145, 640], [222, 640], [212, 700], [213, 770], [235, 775], [275, 742], [278, 790], [240, 798], [228, 820], [235, 845], [262, 860], [262, 900], [275, 945], [245, 969], [150, 969], [160, 930], [150, 895], [145, 880], [120, 850], [125, 820], [132, 790], [150, 760], [140, 720], [130, 700], [150, 680]],
  [[21, 640], [52, 640], [55, 690], [95, 698], [92, 715], [60, 712], [42, 740], [21, 700]],
  [[21, 765], [45, 768], [48, 795], [82, 805], [70, 822], [40, 812], [21, 825]],
  [[100, 830], [125, 838], [140, 885], [120, 890], [90, 880], [95, 905], [60, 940], [25, 935], [55, 915], [62, 865], [95, 855]],
  [[108, 905], [135, 912], [132, 940], [118, 958], [105, 930]],
  [[425, 690], [456, 700], [430, 720], [445, 750], [420, 768], [407, 750], [412, 710]],
  [[475, 655], [500, 652], [490, 682]],
  [[18, 850], [38, 848], [30, 870], [18, 868]],
  [[235, 650], [255, 655], [250, 675], [238, 672]],
  [[15, 955], [35, 962], [32, 975], [15, 975]],
  [[58, 950], [75, 950], [72, 960], [60, 960]],
];

const Thumb4 = () => (
  <Thumb viewBox="21 645 476 387" preserveAspectRatio="none">
    <rect x="21" y="645" width="476" height="400" fill="#fff" />
    <polygon
      points="222,645 500,645 500,975 330,975 268,900 240,830 215,810 213,720"
      fill="#94ede3"
    />
    <polygon points={rough([[362, 640], [402, 640], [410, 700], [398, 715], [372, 668]], 3, 3)} fill="#fff" />
    <polygon points="262,885 325,969 325,975 255,975" fill="#fff" />
    {pinkAreas.map((p, i) => (
      <polygon key={i} points={rough(p, i + 40, i < 2 ? 4.5 : 3)} fill="#dc5e9f" />
    ))}
    <g fill="#94ede3">
      <polygon points={rough([[170, 678], [184, 680], [182, 700], [170, 698]], 5, 2)} />
      <polygon points={rough([[278, 850], [292, 845], [300, 870], [300, 900], [285, 880]], 8, 2)} />
      <polygon points={rough([[445, 940], [470, 935], [462, 975], [440, 975]], 9, 3)} />
      <polygon points={rough([[345, 680], [354, 690], [345, 702], [338, 690]], 6, 2)} />
    </g>
    <g fill="none" stroke="#e58ab9" strokeWidth="1.300">
      <polyline points="140,800 170,820 185,860 175,920 200,969" />
      <polyline points="155,740 180,760 200,800 150,850" />
      <polyline points="330,860 380,900 420,930 430,969" />
      <polyline points="400,880 390,920 360,950" />
      <polyline points="480,890 440,910 400,905" />
      <polyline points="30,660 50,690 40,720" />
      <polyline points="180,840 240,850" />
      <polyline points="60,880 80,900 60,930" />
    </g>
    <path d="M250 645q4 30 10 40l30 60 62 92" fill="none" stroke="#8fa6a8" strokeWidth="2" />
    <path d="M228 830l12 30 3 50 5 30 8 29" fill="none" stroke="#fff" strokeWidth="5" />
    <path
      d="M114 645l-3 25-8 40 15 13 42 2 20 12 25 35 8 55 20 35M388 845l30-4 37-6 25 6 17 4M345 935l-4 34M246 945l-6 24"
      fill="none"
      stroke="#3f64e8"
      strokeWidth="2.500"
      strokeDasharray="9 2"
    />
  </Thumb>
);

/* ---------- data ---------- */

const menus = [
  ["Proyecto", 40], ["Edición", 43], ["Ver", 18], ["Capa", 34], ["Configuración", 62], ["Complementos", 74],
  ["Vectorial", 39], ["Ráster", 37], ["Base de datos", 59], ["Web", 32], ["Procesos", 40], ["Ayuda", 39],
];

const U = ({ children }) => <u>{children}</u>;
const items = [
  { h: 16, t: "Nuevo", k: "Control+N", i: "page", on: true },
  { h: 17, t: "Nuevo usando plantilla", sub: true },
  "-",
  { h: 18, t: "Abrir...", k: "Control+A", i: "folder" },
  { h: 16, t: "Abrir formulario", sub: true },
  { h: 17, t: <>Abrir <U>r</U>eciente</>, sub: true },
  { h: 18, t: "Cerrar" },
  "-",
  { h: 18, t: "Guardar", k: "Control+G", i: "save" },
  { h: 16, t: "Guardar como...", k: "Control+Mayúsculas+G", i: "saveAs" },
  { h: 17, t: "Guardar en", sub: true },
  { h: 16, t: "Revertir..." },
  "-",
  { h: 19, t: <><U>P</U>ropiedades...</>, k: "Control+Mayúsculas+P" },
  { h: 16, t: <>Opciones de autoen<U>s</U>amblado...</> },
  { h: 16, t: "Importar/Exportar", sub: true },
  "-",
  { h: 19, t: <>Nueva composición de im<U>p</U>resión...</>, k: "Control+P", i: "newLayout" },
  { h: 15, t: <>Nuevo infor<U>m</U>e...</>, i: "newReport" },
  { h: 17, t: "Administrador de composiciones...", i: "layoutMgr" },
  { h: 17, t: "Composiciones", sub: true },
  { h: 17, t: "Salir de QGIS", k: "Control+Q", pt: 2 },
];

const bar1 = [
  "bookmarkNew", "bookmarkAdd", "bookmark", "refresh", "|", "pick", "lens", "v", "selBox", "v", "copies", "v",
  "deselect", "table", "calc", "gear", "sigma", "ruler", "vd", "tip", "textNote", "vd",
];
const bar2 = [
  "next", "|", "tag", "tagDot", "labelOn", "tagB", "tagC", "tagB", "tagC", "tagC", "|", "globeFind", "|", "python", "|",
  "help", "|", "nn", "|", "setsq", "nodes", "v", "vecA", "vecB", "vecC", "vecD", "vecA", "vecC", "vecD", "vecE", "vecF",
  "vecG", "vecH", "vecH", "vecI", "vecJ", "vecK", "vd",
];
const layerBar = ["brush", "addGroup", "eye", "filter", "expr", "v", "expand", "collapse", "remove"];

const DOCS = "C:\\Users\\Irene\\Documents\\";
const projects = [
  {
    name: "clase1", map: Thumb1, ls: 0.035,
    path: DOCS + "_WORK\\10_CEU\\02_curso_visual_data\\_clases\\_GIS\\clase1.qgz",
    crs: "EPSG:3042 (ETRS89 / UTM zone 30N (N-E))",
  },
  {
    name: "clase2", map: Thumb2, ls: 0.035,
    path: DOCS + "_WORK\\10_CEU\\02_curso_visual_data\\_clases\\_GIS\\clase2.qgz",
    crs: "EPSG:3042 (ETRS89 / UTM zone 30N (N-E))",
  },
  {
    name: "clase2", off: true, ls: 0.03,
    path: DOCS + "_WORK\\10_CEU\\02_curso_visual_data\\_clases\\dia1\\_GIS\\clase2.qgz",
    crs: "EPSG:3042 (ETRS89 / UTM zone 30N (N-E))",
  },
  {
    name: "clase1", off: true, map: Thumb3, ls: 0.03,
    path: DOCS + "_WORK\\10_CEU\\02_curso_visual_data\\_clases\\dia1\\_GIS\\clase1.qgz",
    crs: "EPSG:3042 (ETRS89 / UTM zone 30N (N-E))",
  },
  {
    name: "unit2-ex2", map: Thumb4, ls: -0.06,
    path: DOCS + "Curso_GIS online\\2-Spatial Analysis Using Vector Data\\EX2\\unit2-ex2.qgz",
    crs: "EPSG:25830 (ETRS89 / UTM zone 30N)",
  },
];

export default function App() {
  return (
    <>
      <Global />
      <Page>
        <Note>
          <NoteArrow viewBox="0 0 148 101">
            <path d="M3.500 101V24.500H139M131 16.500l8.500 8-8.500 8" fill="none" stroke={NAVY} strokeWidth="2" />
          </NoteArrow>
          <NoteText>Empezamos nuevo proyecto</NoteText>
        </Note>
        <Win>
          <TitleBar>
            <Icon n="logo" />
            <TitleText>Proyecto sin título</TitleText>
            <TitleText>&nbsp; QGIS</TitleText>
            <WinButtons>
              <Icon n="winMin" s={11} />
              <Icon n="winRestore" s={11} />
              <Icon n="winClose" s={11} />
            </WinButtons>
          </TitleBar>
          <MenuBar>
            {menus.map(([t, w], i) => (
              <MenuLabel key={t} $w={w} $open={i === 0}>
                {t}
              </MenuLabel>
            ))}
          </MenuBar>
          <Toolbar $pad={330}>
            <Tools list={bar1} />
          </Toolbar>
          <Toolbar $pad={322}>
            <Tools list={bar2} />
          </Toolbar>
          <Body>
            <SideTools />
            <Docks>
              <BrowserBox>
                <TreeRow>
                  <Icon n="flake" s={11} />
                  <StatusText>GeoNode</StatusText>
                </TreeRow>
              </BrowserBox>
              <DockHead>
                <StatusText>Capas</StatusText>
                <DockButtons>
                  <Icon n="float" s={9} />
                  <Icon n="close" s={9} />
                </DockButtons>
              </DockHead>
              <DockTools>
                <Tools list={layerBar} />
              </DockTools>
              <LayersBox />
            </Docks>
            <Splitter>
              <Grip />
            </Splitter>
            <Main>
              <Heading>Proyectos recientes</Heading>
              <ListBox>
                <Cards>
                  {projects.map((p, i) => (
                    <Card key={i} $short={!p.map} $off={p.off}>
                      {p.map && <p.map />}
                      <Info $short={!p.map}>
                        <Name>{p.name}</Name>
                        <Line $ls={p.ls}>{p.path}</Line>
                        <Line>{p.crs}</Line>
                      </Info>
                    </Card>
                  ))}
                </Cards>
                <Scroll>
                  <ScrollBtn>
                    <i />
                  </ScrollBtn>
                  <ScrollThumb />
                  <ScrollBtn $down>
                    <i />
                  </ScrollBtn>
                </Scroll>
              </ListBox>
              <MessageBar>
                <b>New QGIS version available:</b> Visit <a>
                  <u>https://download.qgis.org</u>
                </a>{" "}
                to get your copy of version 3.6.3
              </MessageBar>
            </Main>
          </Body>
          <StatusBar>
            <Locator $w={186} $p={5}>
              <Icon n="search" s={10} />
              Escriba para localizar (Ctrl+K)
            </Locator>
            <StatusText $m={5}>Preparado</StatusText>
            <StatusRight>
              <StatusText $w={46} $ls={-0.3}>Coordenada</StatusText>
              <Field $w={79} />
              <Slot $w={17}>
                <Icon n="target" />
              </Slot>
              <StatusText $w={25} $m={6} $ls={-0.32}>Escala</StatusText>
              <Field $w={59} $p={0}>
                1:29854291
                <DropZone>
                  <Caret $c="#666" />
                </DropZone>
              </Field>
              <Slot $w={24}>
                <Icon n="lock" />
              </Slot>
              <StatusText $w={45} $ls={-0.48}>Amplificador</StatusText>
              <Field $w={63}>
                100%
                <Arrows />
              </Field>
              <StatusText $w={37} $m={7}>Rotación</StatusText>
              <Field $w={60}>
                0,0 °
                <Arrows />
              </Field>
              <Slot $w={18}>
                <Icon n="check" s={10} />
              </Slot>
              <StatusText $w={57}>Representar</StatusText>
              <Icon n="globe" />
              <StatusText $w={52} $m={3}>EPSG:4326</StatusText>
              <Icon n="bubble" s={13} />
            </StatusRight>
          </StatusBar>
          <BottomLine />
          <Menu>
            {items.map((it, i) =>
              it === "-" ? (
                <Sep key={i} />
              ) : (
                <Item key={i} $h={it.h} $on={it.on} $pt={it.pt}>
                  <ItemIcon>{it.i && <Icon n={it.i} />}</ItemIcon>
                  <span>{it.t}</span>
                  <Shortcut>{it.k}</Shortcut>
                  {it.sub && <Sub />}
                </Item>
              )
            )}
          </Menu>
        </Win>
      </Page>
    </>
  );
}
